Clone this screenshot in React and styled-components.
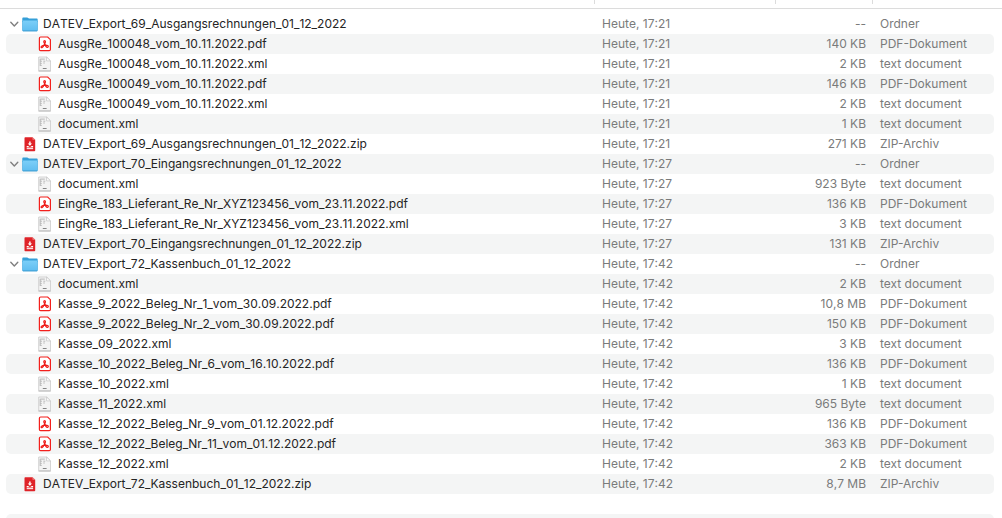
import React, { useState } from "react";
import styled, { createGlobalStyle } from "styled-components";

const GlobalStyle = createGlobalStyle`
  *, *::before, *::after { box-sizing: border-box; }
  body {
    margin: 0;
    background: #ffffff;
    color: #242424;
    font: 12px/20px Inter, "Liberation Sans", sans-serif;
    font-kerning: none;
  }
`;

const Window = styled.main`
  display: flex;
  flex-direction: column;
  height: 100vh;
  overflow: hidden;
`;

const HeaderStrip = styled.div`
  flex: none;
  display: grid;
  grid-template-columns: minmax(0, 1fr) 181px 97px 130px;
  height: 9px;
  padding-bottom: 4px;
  border-bottom: 1px solid #dcdcdc;
`;

const HeaderCell = styled.span`
  border-left: 1px solid ${(p) => (p.$divider ? "#dcdcdc" : "transparent")};
`;

const ListArea = styled.div`
  padding: 5px 8px 0 6px;
`;

const Table = styled.table`
  width: 100%;
  table-layout: fixed;
  border-collapse: separate;
  border-spacing: 0;
`;

const Column = styled.col`
  width: ${(p) => p.$width};
`;

const Row = styled.tr`
  height: 20px;

  &:nth-child(even) td { background: #f4f5f5; }
  td:first-child { border-radius: 5px 0 0 5px; }
  td:last-child { border-radius: 0 5px 5px 0; }
`;

const Cell = styled.td`
  height: 20px;
  padding: 0 8px;
  color: #7a7b7b;
  white-space: nowrap;
`;

const NameCell = styled(Cell)`
  padding: 0;
  color: #242424;
`;

const SizeCell = styled(Cell)`
  padding-right: 6px;
  text-align: right;
`;

const KindCell = styled(Cell)`
  font-kerning: normal;
`;

const Entry = styled.div`
  display: flex;
  align-items: center;
  height: 20px;
  padding-left: ${(p) => (p.$nested ? "31px" : "16px")};
`;

const FolderEntry = styled(Entry)`
  padding-left: 0;
`;

const Toggle = styled.button`
  display: flex;
  align-items: center;
  justify-content: center;
  width: 16px;
  height: 20px;
  padding: 0;
  border: 0;
  background: none;

  svg { transform: rotate(${(p) => (p.$open ? "0deg" : "-90deg")}); }
`;

const IconSlot = styled.span`
  display: flex;
  flex: none;
  width: 16px;
  margin-right: 5px;
`;

const Chevron = () => (
  <svg width="10" height="10" viewBox="0 0 10 10" fill="none" aria-hidden="true">
    <path d="M1.800 3.300 5.300 7l3.500-3.700" stroke="#7f7f7f" strokeWidth="1.400" strokeLinecap="round" strokeLinejoin="round" />
  </svg>
);

const FolderIcon = () => (
  <svg width="16" height="16" viewBox="0 0 16 16" aria-hidden="true">
    <defs>
      <linearGradient id="folderFront" x1="0" y1="0" x2="0" y2="1">
        <stop offset="0" stopColor="#7ccff8" />
        <stop offset="1" stopColor="#5fbdf0" />
      </linearGradient>
    </defs>
    <path d="M.3 2.800c0-.8.400-1.200 1.200-1.200h3.700c.8 0 1.100.9 1.900.9h7.400c.8 0 1.200.4 1.200 1.200V6H.3z" fill="#359fd8" />
    <path d="M.3 4.600h15.400v9.300c0 .7-.4 1.100-1.100 1.100H1.400c-.7 0-1.100-.4-1.100-1.100z" fill="url(#folderFront)" />
    <path d="M.4 4.900v9c0 .6.400 1 1 1h13.200c.6 0 1-.4 1-1v-9" stroke="#49a9dd" strokeWidth=".6" fill="none" />
    <path d="M.8 14.900h14.400" stroke="#3d9dd2" strokeWidth=".8" />
  </svg>
);

const PdfIcon = () => (
  <svg width="16" height="16" viewBox="0 0 16 16" fill="none" aria-hidden="true">
    <path d="M3.600 1h7.100l2.700 2.700v9.700c0 .8-.4 1.200-1.200 1.200H3.600c-.8 0-1.200-.4-1.200-1.200V2.200c0-.8.400-1.200 1.200-1.200Z" fill="#fff" stroke="#f3201c" strokeWidth="1.200" />
    <path d="M7.500 7.500c-.9-1.300-1-2.900.1-2.900s1 1.500.3 3C7.100 9.400 6 11.400 5 11.700c-1.100.2-1.300-1-.1-1.700.9-.5 2.700-.8 3.900-.8 1.500 0 2.700.5 2.500 1.500-.2 1-1.500.7-2.300-.2C8.400 9.800 7.900 8.400 7.500 7.500Z" stroke="#ee1c18" strokeWidth="1.200" />
  </svg>
);

const XmlIcon = () => (
  <svg width="16" height="16" viewBox="0 0 16 16" fill="none" aria-hidden="true">
    <path d="M1.700 1h7.900L13.500 4.900v9.900H1.700z" fill="#f3f3f3" stroke="#d0d0d0" strokeWidth=".9" />
    <path d="M1.500 15.100h12.200" stroke="#b0b0b0" strokeWidth=".8" />
    <path d="M9.600 1v3.900h3.900z" fill="#fff" stroke="#c2c2c2" strokeWidth=".7" />
    <path d="M3.200 3.100h4.600M3.200 3v7M3.200 5.200h1.700M6.300 5.200h2M6.300 7h1.500M3.200 7.400h1.500M3.200 9.400h1.500" stroke="#b8b8b8" strokeWidth="1" />
    <path d="M5.800 12.500h3.800" stroke="#858585" strokeWidth="1" />
  </svg>
);

const ZipIcon = () => (
  <svg width="16" height="16" viewBox="0 0 16 16" aria-hidden="true">
    <path d="M3.200 1.200h7.300l2.700 2.500v10.800c0 .5-.3.800-.8.800H3.200c-.4 0-.7-.3-.7-.8V2c0-.5.300-.8.700-.8Z" fill="#df2328" />
    <path d="M10.500 1.200 13.200 3.700h-2.700z" fill="#ee8585" />
    <path d="M7.200 5.500h1.400v2h1.500L7.900 9.700 5.700 7.500h1.500z" fill="#fff" />
    <path d="M4.700 9.900h1.400l1.800 1.300 1.800-1.300h1.400v1.300H4.700z" fill="#fff" />
    <path d="M4.700 11.700h6.400v1.500H4.700z" fill="#fff" opacity=".85" />
  </svg>
);

const icons = { folder: FolderIcon, pdf: PdfIcon, xml: XmlIcon, zip: ZipIcon };
const kinds = { folder: "Ordner", pdf: "PDF-Dokument", xml: "text document", zip: "ZIP-Archiv" };

const groups = [
  {
    name: "DATEV_Export_69_Ausgangsrechnungen_01_12_2022",
    date: "Heute, 17:21",
    zipSize: "271 KB",
    files: [
      ["AusgRe_100048_vom_10.11.2022.pdf", "140 KB"],
      ["AusgRe_100048_vom_10.11.2022.xml", "2 KB"],
      ["AusgRe_100049_vom_10.11.2022.pdf", "146 KB"],
      ["AusgRe_100049_vom_10.11.2022.xml", "2 KB"],
      ["document.xml", "1 KB"],
    ],
  },
  {
    name: "DATEV_Export_70_Eingangsrechnungen_01_12_2022",
    date: "Heute, 17:27",
    zipSize: "131 KB",
    files: [
      ["document.xml", "923 Byte"],
      ["EingRe_183_Lieferant_Re_Nr_XYZ123456_vom_23.11.2022.pdf", "136 KB"],
      ["EingRe_183_Lieferant_Re_Nr_XYZ123456_vom_23.11.2022.xml", "3 KB"],
    ],
  },
  {
    name: "DATEV_Export_72_Kassenbuch_01_12_2022",
    date: "Heute, 17:42",
    zipSize: "8,7 MB",
    files: [
      ["document.xml", "2 KB"],
      ["Kasse_9_2022_Beleg_Nr_1_vom_30.09.2022.pdf", "10,8 MB"],
      ["Kasse_9_2022_Beleg_Nr_2_vom_30.09.2022.pdf", "150 KB"],
      ["Kasse_09_2022.xml", "3 KB"],
      ["Kasse_10_2022_Beleg_Nr_6_vom_16.10.2022.pdf", "136 KB"],
      ["Kasse_10_2022.xml", "1 KB"],
      ["Kasse_11_2022.xml", "965 Byte"],
      ["Kasse_12_2022_Beleg_Nr_9_vom_01.12.2022.pdf", "136 KB"],
      ["Kasse_12_2022_Beleg_Nr_11_vom_01.12.2022.pdf", "363 KB"],
      ["Kasse_12_2022.xml", "2 KB"],
    ],
  },
];

function FileRow({ name, type, date, size, nested, open, onToggle }) {
  const Icon = icons[type];
  const EntryBox = type === "folder" ? FolderEntry : Entry;
  return (
    <Row>
      <NameCell>
        <EntryBox $nested={nested}>
          {type === "folder" && (
            <Toggle type="button" $open={open} aria-expanded={open} aria-label={name} onClick={onToggle}>
              <Chevron />
            </Toggle>
          )}
          <IconSlot><Icon /></IconSlot>
          {name}
        </EntryBox>
      </NameCell>
      <Cell>{date}</Cell>
      <SizeCell>{size}</SizeCell>
      <KindCell>{kinds[type]}</KindCell>
    </Row>
  );
}

const EmptyRow = () => (
  <Row aria-hidden="true">
    <Cell /><Cell /><Cell /><Cell />
  </Row>
);

export default function App() {
  const [closed, setClosed] = useState({});
  const toggle = (name) => setClosed((c) => ({ ...c, [name]: !c[name] }));

  return (
    <>
      <GlobalStyle />
      <Window>
        <HeaderStrip aria-hidden="true">
          <HeaderCell />
          <HeaderCell $divider />
          <HeaderCell $divider />
          <HeaderCell $divider />
        </HeaderStrip>
        <ListArea>
          <Table>
            <colgroup>
              <Column $width="auto" />
              <Column $width="181px" />
              <Column $width="97px" />
              <Column $width="122px" />
            </colgroup>
            <tbody>
              {groups.map((g) => (
                <React.Fragment key={g.name}>
                  <FileRow name={g.name} type="folder" date={g.date} size="--" open={!closed[g.name]} onToggle={() => toggle(g.name)} />
                  {!closed[g.name] && g.files.map(([name, size]) => (
                    <FileRow key={name} name={name} type={name.slice(-3)} date={g.date} size={size} nested />
                  ))}
                  <FileRow name={`${g.name}.zip`} type="zip" date={g.date} size={g.zipSize} />
                </React.Fragment>
              ))}
              <EmptyRow />
              <EmptyRow />
            </tbody>
          </Table>
        </ListArea>
      </Window>
    </>
  );
}
